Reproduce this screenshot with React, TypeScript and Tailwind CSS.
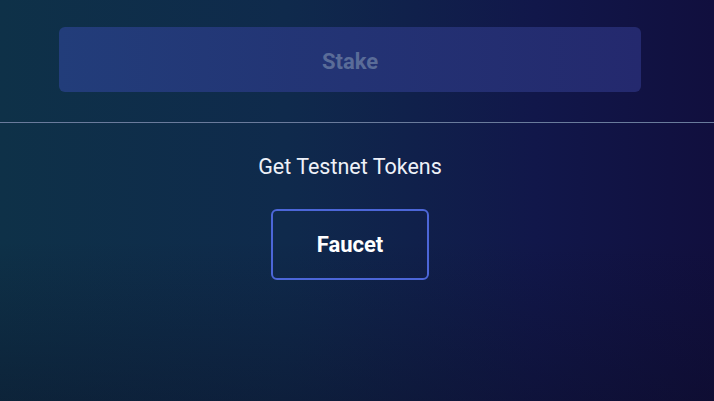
export default function App() {
  return (
    <div className="relative h-[401px] w-[714px] overflow-hidden bg-[linear-gradient(90deg,#0e3148_0%,#0f2a4c_40%,#11174a_75%,#110f3e_100%)] font-['Roboto',sans-serif]">
      <div className="absolute inset-0 bg-[linear-gradient(180deg,rgba(0,0,0,0)_60%,rgba(10,10,30,0.35)_100%)]" />
      <div className="relative flex flex-col">
        <div className="w-[700px] px-[59px] pt-[27px]">
          <button
            disabled
            className="flex h-[65px] w-full items-center justify-center rounded-md bg-[linear-gradient(90deg,#223d7a,#24296e)] pt-[3px] text-[22px] font-bold text-[#5a6c98]"
          >
            Stake
          </button>
        </div>
        <div className="mt-[30px] h-px w-full bg-[#6a7b9c]" />
        <div className="mt-[29px] w-[700px] text-center text-[21.5px] leading-[30px] text-[#eef1f8]">Get Testnet Tokens</div>
        <div className="mt-[27px] flex w-[700px] justify-center">
          <button className="flex h-[71px] w-[158px] items-center justify-center rounded-md border-2 border-[#4c66d8] text-[22px] font-bold text-white">
            Faucet
          </button>
        </div>
      </div>
    </div>
  );
}
